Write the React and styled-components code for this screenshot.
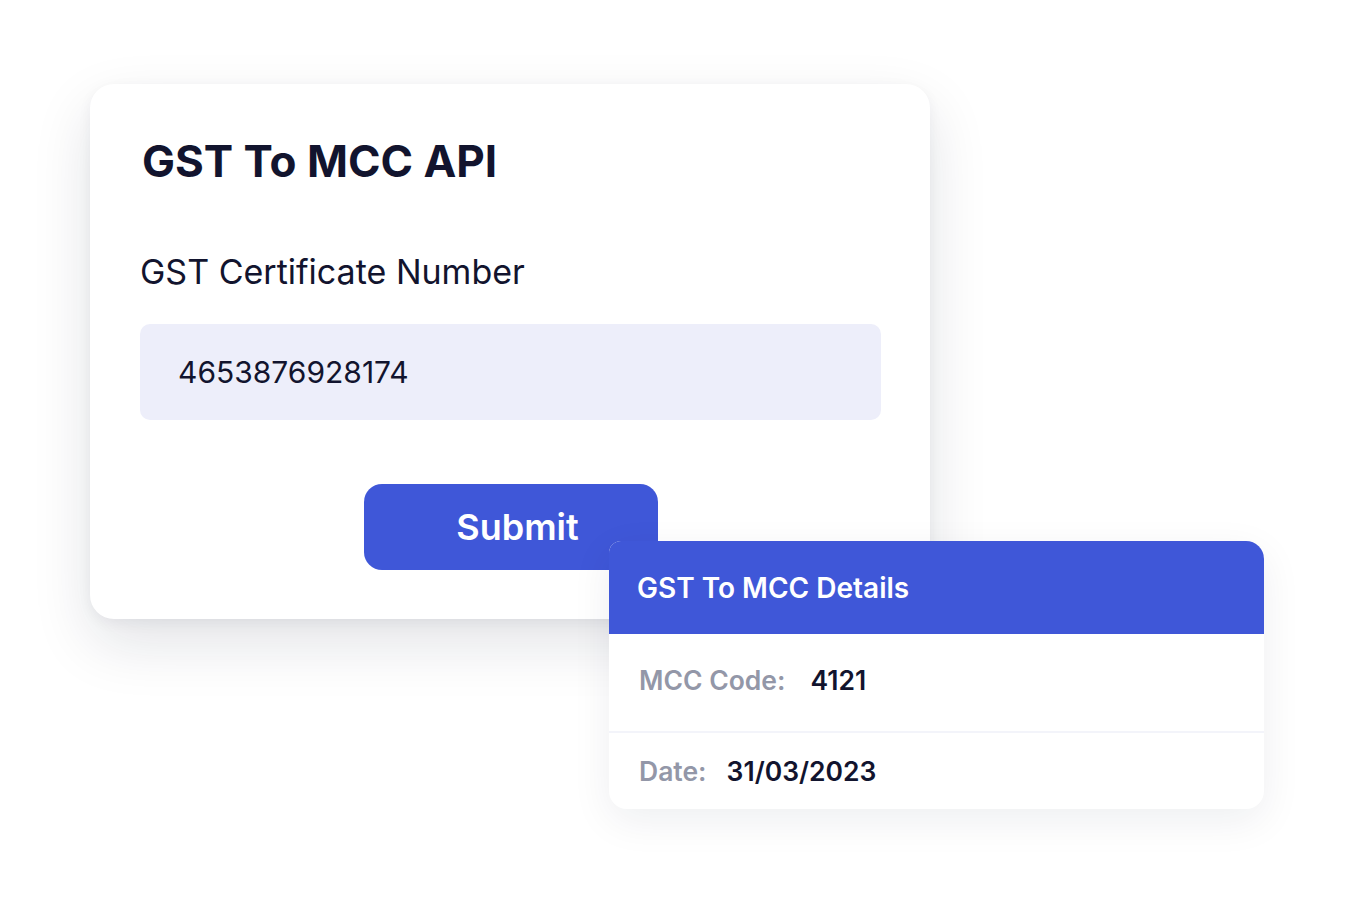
import styled, { createGlobalStyle } from "styled-components";

const GlobalStyle = createGlobalStyle`
  * { box-sizing: border-box; }
  html, body {
    margin: 0;
    background: #ffffff;
    font-family: Inter, "Noto Sans", sans-serif;
    color: #12142e;
  }
`;

const Stage = styled.div`
  position: relative;
  width: 1354px;
  height: 908px;
  padding: 84px 0 0 90px;
`;

const FormCard = styled.div`
  width: 840px;
  height: 535px;
  background: #ffffff;
  border-radius: 24px;
  box-shadow: 0 24px 60px rgba(20, 22, 50, 0.12), 0 4px 14px rgba(20, 22, 50, 0.05);
  padding: 49px 50px 0 50px;
  display: flex;
  flex-direction: column;
`;

const Title = styled.h1`
  margin: 0 0 0 2px;
  font-size: 44px;
  line-height: 56px;
  font-weight: 700;
  color: #12142e;
`;

const Label = styled.label`
  margin-top: 63px;
  font-size: 34px;
  line-height: 40px;
  font-weight: 400;
  color: #12142e;
`;

const Input = styled.div`
  margin-top: 32px;
  width: 741px;
  height: 96px;
  border-radius: 10px;
  background: #edeefa;
  padding: 0 38px;
  display: flex;
  align-items: center;
  font-size: 30px;
  color: #12142e;
`;

const SubmitButton = styled.button`
  margin: 64px 0 0 224px;
  width: 294px;
  height: 86px;
  border: none;
  border-radius: 18px;
  background: #3f57d8;
  color: #ffffff;
  font-family: inherit;
  font-size: 36px;
  font-weight: 600;
  padding-left: 19px;
`;

const DetailsCard = styled.div`
  position: absolute;
  left: 609px;
  top: 541px;
  width: 655px;
  background: #ffffff;
  border-radius: 12px 18px 18px 18px;
  box-shadow: 0 12px 40px rgba(20, 22, 50, 0.07);
  overflow: hidden;
`;

const DetailsHeader = styled.div`
  height: 93px;
  background: #3f57d8;
  color: #ffffff;
  display: flex;
  align-items: center;
  padding: 0 28px;
  font-size: 28px;
  font-weight: 600;
`;

const Row = styled.div`
  height: ${(p) => p.h}px;
  display: flex;
  align-items: center;
  gap: ${(p) => p.gap}px;
  padding: 0 30px ${(p) => p.pb || 0}px 30px;
  font-size: 26.5px;
  font-weight: 600;
  border-top: ${(p) => (p.divided ? "2px solid #f3f4fa" : "none")};
`;

const Key = styled.span`
  color: #9397a8;
`;

const Value = styled.span`
  color: #12142e;
`;

export default function App() {
  return (
    <>
      <GlobalStyle />
      <Stage>
        <FormCard>
          <Title>GST To MCC API</Title>
          <Label>GST Certificate Number</Label>
          <Input>4653876928174</Input>
          <SubmitButton>Submit</SubmitButton>
        </FormCard>
        <DetailsCard>
          <DetailsHeader>GST To MCC Details</DetailsHeader>
          <Row h={97} gap={25} pb={6}>
            <Key>MCC Code:</Key>
            <Value>4121</Value>
          </Row>
          <Row h={78} gap={20} divided>
            <Key>Date:</Key>
            <Value>31/03/2023</Value>
          </Row>
        </DetailsCard>
      </Stage>
    </>
  );
}
